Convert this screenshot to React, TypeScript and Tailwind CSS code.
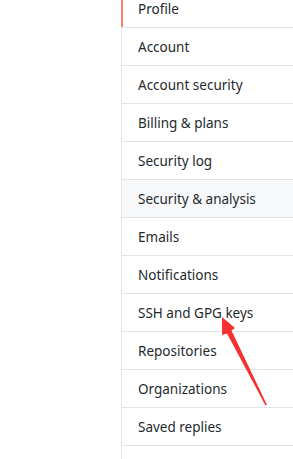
const items = [
  "Profile",
  "Account",
  "Account security",
  "Billing & plans",
  "Security log",
  "Security & analysis",
  "Emails",
  "Notifications",
  "SSH and GPG keys",
  "Repositories",
  "Organizations",
  "Saved replies",
  "",
];

export default function App() {
  return (
    <div className="relative h-[459px] overflow-hidden bg-white font-['Noto_Sans','Liberation_Sans',sans-serif] text-[13.5px] text-[#24292e]">
      <div className="pl-[121px]">
        <nav className="-mt-[10px] w-[240px] border-l border-[#e1e4e8]">
          {items.map((label, i) => (
            <div
              key={i}
              className={
                "relative flex h-[38px] items-center border-b border-[#e1e4e8] pl-4 pt-[1px] leading-[20px] " +
                (label === "Security & analysis" ? "bg-[#f6f8fa]" : "")
              }
            >
              {i === 0 && <span className="absolute -left-px top-0 bottom-0 w-[2px] bg-[#f9826c]" />}
              {label}
            </div>
          ))}
        </nav>
      </div>
      <svg className="absolute left-0 top-0" width="293" height="459" viewBox="0 0 293 459">
        <polygon
          points="222,317 235,328 231.5,330.5 267,405 265.5,405.5 227,333.5 222,335"
          fill="#f53131"
        />
      </svg>
    </div>
  );
}
